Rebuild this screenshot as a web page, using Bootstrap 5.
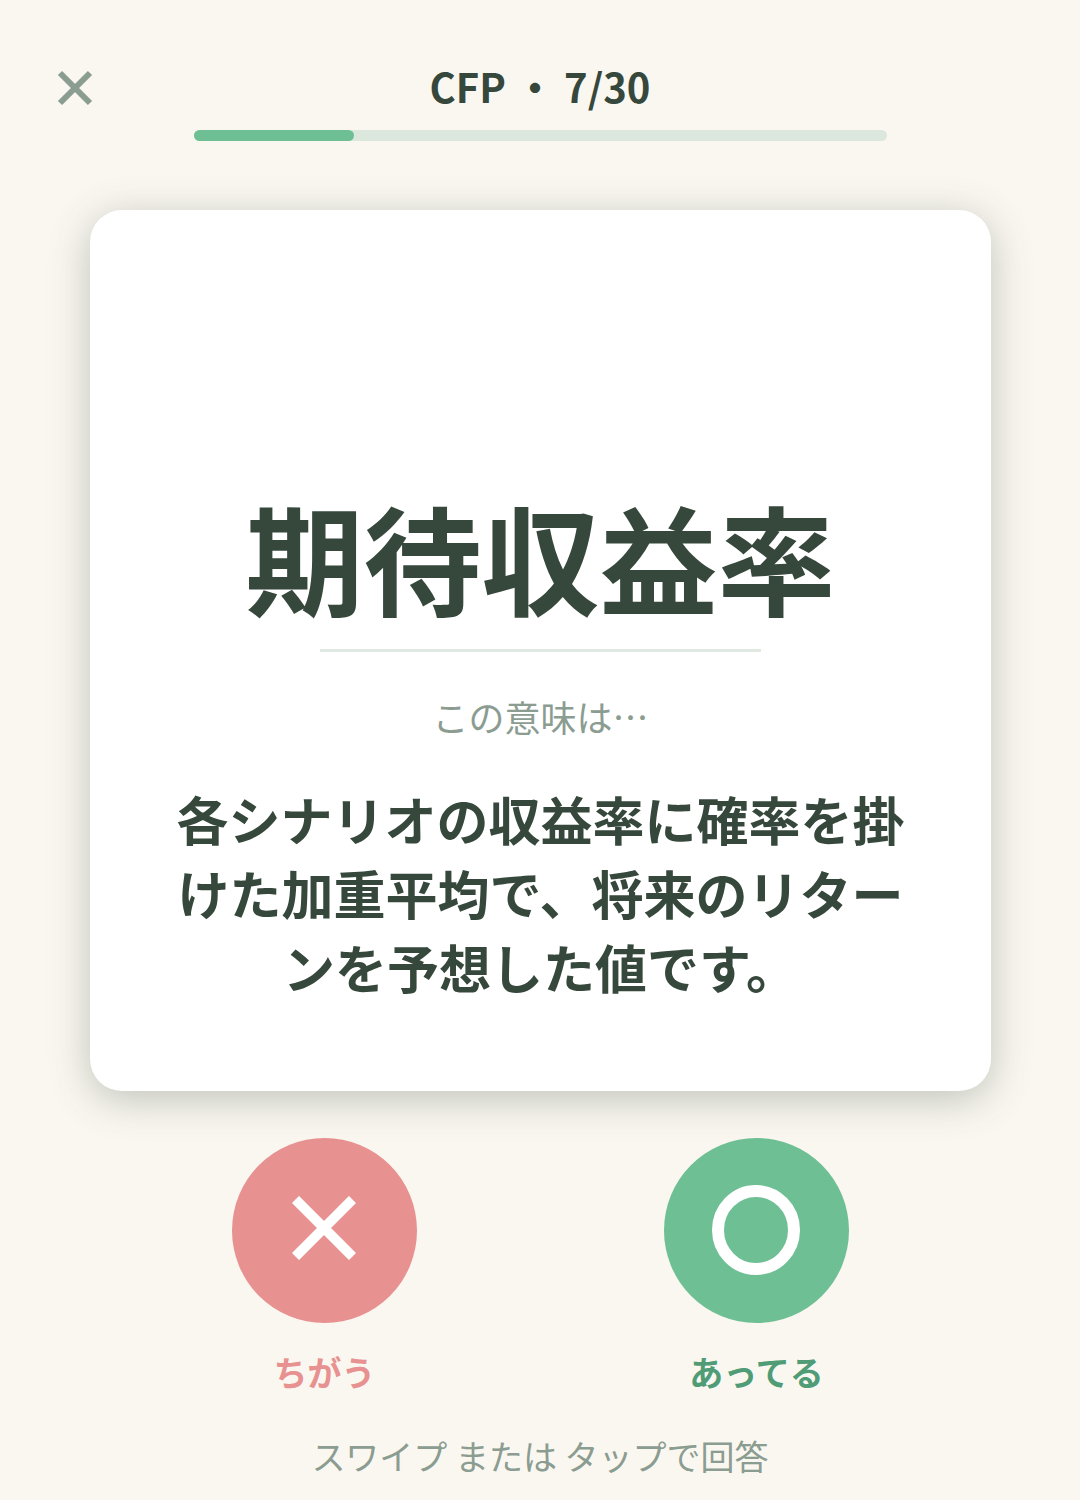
<!DOCTYPE html>
<html lang="ja">
<head>
    <meta charset="UTF-8">
    <meta name="viewport" content="width=device-width, initial-scale=1.0">
    <title>CFP</title>
    <link href="https://cdn.jsdelivr.net/npm/bootstrap@5.3.0/dist/css/bootstrap.min.css" rel="stylesheet">
    <style>
        body {
            font-family: "Noto Sans CJK JP", "Noto Sans", sans-serif;
            background: #faf7f0;
            color: #36483c;
            height: 1500px;
            overflow: hidden;
        }
        .top-bar { height: 210px; padding: 60px 0 0 0; }
        .close-btn { left: 56px; top: 69px; width: 38px; height: 38px; }
        .top-title { font-size: 40px; line-height: 52px; font-weight: 700; height: 70px; }
        .prog-track { width: 693px; height: 11px; background: #dce7dd; border-radius: 6px; margin-left: 194px; }
        .prog-fill { height: 100%; background: #6fbf95; border-radius: 6px; }
        .flash-card {
            width: 901px; height: 881px; margin-left: 90px; border-radius: 32px; border: 0;
            box-shadow: 0 8px 40px rgba(54, 72, 60, .3);
            padding-bottom: 87px;
        }
        .term { font-size: 118px; line-height: 150px; font-weight: 700; }
        .term-line { width: 441px; height: 3px; background: #dfe8e1; margin: 18px 0 38px; }
        .hint { font-size: 36px; line-height: 52px; color: #8b9c91; margin-bottom: 40px; }
        .meaning { font-size: 52px; line-height: 74px; font-weight: 700; width: 740px; }
        .answers { padding: 47px 0 0 232px; gap: 247px; }
        .answer-col { width: 185px; }
        .circle-btn { width: 185px; height: 185px; border-radius: 50%; border: 0; padding: 0; }
        .btn-no { background: #e89191; padding: 0 2px 6px 0; }
        .btn-yes { background: #6fbf95; padding: 0 2px 2px 0; }
        .answer-label { font-size: 34px; line-height: 48px; font-weight: 700; margin-top: 25px; white-space: nowrap; }
        .label-no { color: #e89191; }
        .label-yes { color: #4f9c76; }
        .foot-hint { font-size: 34px; line-height: 48px; color: #8b9c91; margin-top: 36px; }
    </style>
</head>
<body>
    <div class="top-bar position-relative">
        <svg class="close-btn position-absolute" viewBox="0 0 38 38"><path d="M4 4 L34 34 M34 4 L4 34" stroke="#8b9c91" stroke-width="6" fill="none"/></svg>
        <div class="top-title text-center">CFP ・ 7/30</div>
        <div class="prog-track"><div class="prog-fill" style="width: 23.1%"></div></div>
    </div>

    <div class="card flash-card d-flex flex-column align-items-center justify-content-end">
        <div class="term">期待収益率</div>
        <div class="term-line"></div>
        <div class="hint">この意味は…</div>
        <div class="meaning text-center">各シナリオの収益率に確率を掛けた加重平均で、将来のリターンを予想した値です。</div>
    </div>

    <div class="answers d-flex">
        <div class="answer-col d-flex flex-column align-items-center">
            <button class="circle-btn btn-no d-flex align-items-center justify-content-center">
                <svg width="64" height="64" viewBox="0 0 64 64"><path d="M3.5 3.5 L60.5 60.5 M60.5 3.5 L3.5 60.5" stroke="#fff" stroke-width="10" fill="none"/></svg>
            </button>
            <div class="answer-label label-no">ちがう</div>
        </div>
        <div class="answer-col d-flex flex-column align-items-center">
            <button class="circle-btn btn-yes d-flex align-items-center justify-content-center">
                <svg width="90" height="90" viewBox="0 0 90 90"><ellipse cx="45" cy="45" rx="38" ry="39" stroke="#fff" stroke-width="12" fill="none"/></svg>
            </button>
            <div class="answer-label label-yes">あってる</div>
        </div>
    </div>
    <div class="foot-hint text-center">スワイプ または タップで回答</div>

    <script src="https://cdn.jsdelivr.net/npm/bootstrap@5.3.0/dist/js/bootstrap.bundle.min.js"></script>
</body>
</html>
